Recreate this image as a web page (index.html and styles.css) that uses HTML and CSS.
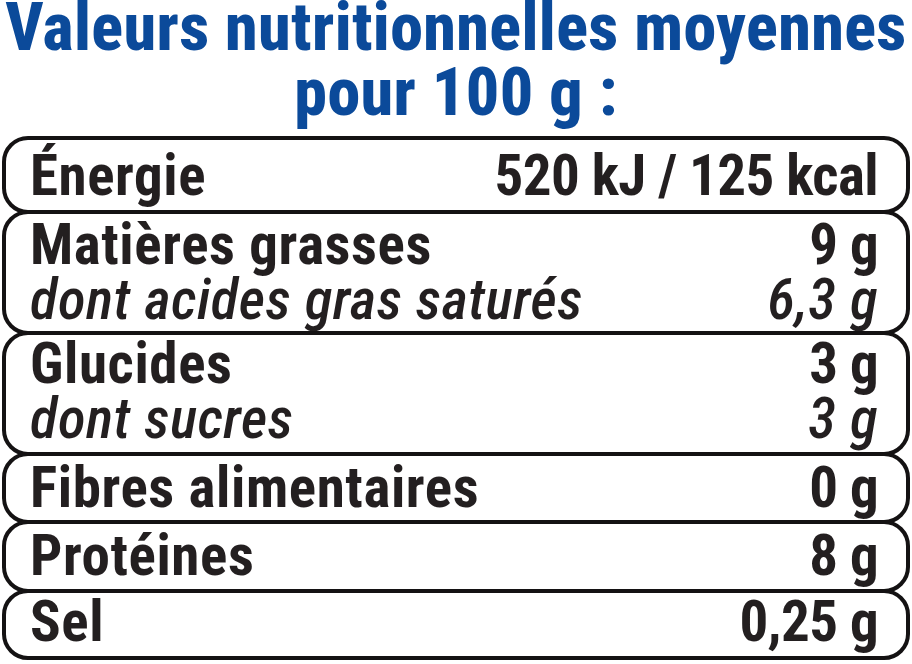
FILE: index.html
```html
<!DOCTYPE html>
<html lang="fr">
<head>
<meta charset="utf-8">
<title>Valeurs nutritionnelles</title>
<link rel="stylesheet" href="styles.css">
</head>
<body>
<div class="label">
  <h1 class="title"><span class="t1">Valeurs nutritionnelles moyennes</span><span class="t2">pour 100 g :</span></h1>
  <div class="table">
    <div class="box r1">
      <div class="row"><span class="name">Énergie</span><span class="val">520 kJ / 125 kcal</span></div>
    </div>
    <div class="box r2">
      <div class="row"><span class="name">Matières grasses</span><span class="val">9 g</span></div>
      <div class="row sub"><span class="name">dont acides gras saturés</span><span class="val">6,3 g</span></div>
    </div>
    <div class="box r3">
      <div class="row"><span class="name">Glucides</span><span class="val">3 g</span></div>
      <div class="row sub"><span class="name">dont sucres</span><span class="val">3 g</span></div>
    </div>
    <div class="box r4">
      <div class="row"><span class="name">Fibres alimentaires</span><span class="val">0 g</span></div>
    </div>
    <div class="box r5">
      <div class="row"><span class="name">Protéines</span><span class="val">8 g</span></div>
    </div>
    <div class="box r6">
      <div class="row"><span class="name">Sel</span><span class="val">0,25 g</span></div>
    </div>
  </div>
</div>
</body>
</html>
```
FILE: styles.css
```css
html, body {
  margin: 0;
  padding: 0;
  background: #ffffff;
}
body {
  width: 912px;
  height: 664px;
  overflow: hidden;
  font-family: "Roboto Condensed", "Roboto", "Liberation Sans", sans-serif;
}
.label {
  display: flex;
  flex-direction: column;
}
.title {
  margin: 0;
  height: 136px;
  color: #0b4a9a;
  font-size: 66px;
  font-weight: 800;
  text-align: center;
  letter-spacing: 0.4px;
  white-space: nowrap;
}
.t1 {
  display: block;
  line-height: 55px;
}
.t2 {
  display: block;
  line-height: 75px;
}
.table {
  display: flex;
  flex-direction: column;
  padding: 0 2px;
}
.box {
  border: 4px solid #141213;
  border-radius: 26px;
  padding: 0 28px 0 24px;
  margin-top: -4px;
  color: #231f20;
}
.box.r1 { margin-top: 0; padding-top: 8px; padding-bottom: 7px; }
.box.r2 { padding-top: 3px; padding-bottom: 4px; }
.box.r3 { padding-top: 1px; padding-bottom: 6px; }
.box.r4 { padding-top: 4px; padding-bottom: 5px; }
.box.r5 { padding-top: 4px; padding-bottom: 6px; }
.box.r6 { padding-top: 1px; padding-bottom: 7px; }
.row {
  display: flex;
  justify-content: space-between;
  font-size: 57px;
  line-height: 55px;
  font-weight: 700;
  white-space: nowrap;
}
.row .name {
  letter-spacing: 0.6px;
}
.row .val {
  letter-spacing: -0.6px;
}
.row.sub {
  font-weight: 500;
  font-style: italic;
}
.row.sub .name,
.row.sub .val {
  letter-spacing: 0.5px;
}
```
